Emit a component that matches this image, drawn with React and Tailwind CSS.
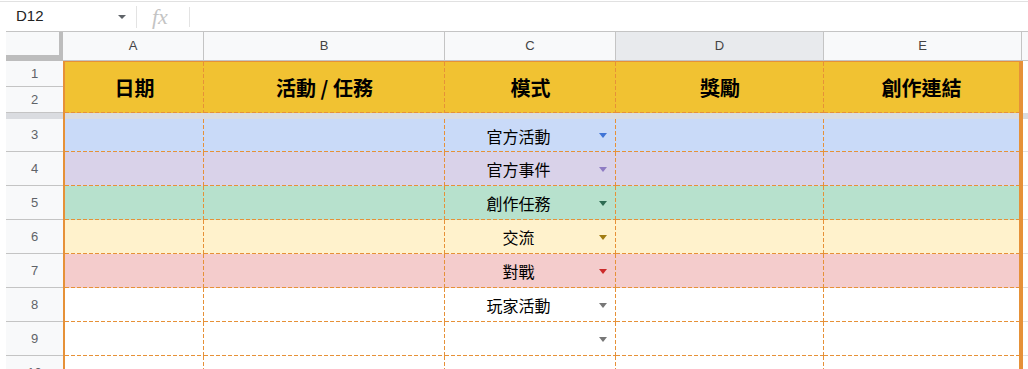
import React from "react"

const cols = ["A", "B", "C", "D", "E"]

const rows = [
  { n: 3, h: "h-[33px]", bg: "bg-[#c9daf8]", label: "官方活動", arrow: "#3f74d6" },
  { n: 4, h: "h-[34px]", bg: "bg-[#d9d2e9]", label: "官方事件", arrow: "#8e7cc3" },
  { n: 5, h: "h-[34px]", bg: "bg-[#b7e1cd]", label: "創作任務", arrow: "#2d6b52" },
  { n: 6, h: "h-[34px]", bg: "bg-[#fff2cc]", label: "交流", arrow: "#a07c12" },
  { n: 7, h: "h-[34px]", bg: "bg-[#f4cccc]", label: "對戰", arrow: "#cc2a2a" },
  { n: 8, h: "h-[34px]", bg: "bg-white", label: "玩家活動", arrow: "#777777" },
  { n: 9, h: "h-[34px]", bg: "bg-white", label: "", arrow: "#777777" },
  { n: 10, h: "h-[34px]", bg: "bg-white", label: "", arrow: null },
]

// dashed right + bottom cell lines, 4px on / 2px off like the sheet draws them
const dash =
  "bg-no-repeat [background-image:repeating-linear-gradient(to_bottom,#e69138_0_4px,transparent_4px_6px),repeating-linear-gradient(to_right,#e69138_0_4px,transparent_4px_6px)] [background-size:1px_100%,100%_1px] [background-position:right_top,left_bottom]"
const dashB =
  "bg-no-repeat [background-image:repeating-linear-gradient(to_right,#e69138_0_4px,transparent_4px_6px)] [background-size:100%_1px] [background-position:left_bottom]"

function Arrow({ color }) {
  return (
    <svg width="8" height="5" viewBox="0 0 8 5">
      <path d="M0 0h8L4 5z" fill={color} />
    </svg>
  )
}

function RowHead({ children, h }) {
  return (
    <div className={`w-[57px] ${h} shrink-0 bg-[#f8f9fa] border-b border-[#c4c4c4] flex items-center justify-center text-[13px] text-[#5f6368]`}>
      {children}
    </div>
  )
}

export default function App() {
  return (
    <div className="w-[1028px] h-[369px] overflow-hidden bg-white font-['Liberation_Sans',Arial,sans-serif]">
      {/* formula bar */}
      <div className="h-[31px] pt-px">
        <div className="h-full border-t border-[#e1e1e1] flex items-center">
          <span className="ml-[16px] w-[90px] text-[15px] text-[#222]">D12</span>
          <span className="ml-[12px] flex"><svg width="8" height="4" viewBox="0 0 8 4"><path d="M0 0h8L4 4z" fill="#5f6368" /></svg></span>
          <span className="ml-[10px] w-px h-[22px] bg-[#e3e3e3]" />
          <span className="ml-[15px] font-['Liberation_Serif',serif] italic text-[22px] text-[#c4c4c4] leading-none">fx</span>
          <span className="ml-[21px] w-px h-[20px] bg-[#e3e3e3]" />
        </div>
      </div>

      <div className="ml-[6px]">
        {/* column letters */}
        <div className="flex h-[30px] border-t border-[#c4c4c4] bg-[#f8f9fa]">
          <div className="w-[57px] flex flex-col">
            <div className="flex flex-1">
              <div className="flex-1" />
              <div className="w-[4px] bg-[#bdbdbd]" />
            </div>
            <div className="h-[6px] bg-[#bdbdbd]" />
          </div>
          {cols.map((c, i) => (
            <div
              key={c}
              className={`${["w-[141px]", "w-[241px]", "w-[171px]", "w-[208px]", "w-[198px]"][i]} ${c === "D" ? "bg-[#e8eaed]" : ""} border-r border-b border-[#c4c4c4] flex items-center justify-center text-[13px] text-[#444]`}
            >
              {c}
            </div>
          ))}
          <div className="flex-1 border-b border-[#c4c4c4]" />
        </div>

        {/* header rows 1-2 */}
        <div className="flex h-[52px]">
          <div className="flex flex-col">
            <RowHead h="h-[26px]">1</RowHead>
            <RowHead h="h-[26px]">2</RowHead>
          </div>
          <div className="w-[960px] flex border-t border-l-2 border-r-4 border-[#e69138] bg-[#f1c232] font-['Noto_Sans_CJK_TC',sans-serif] font-bold text-[20px] text-black">
            <div className={`w-[139px] ${dash} flex items-center justify-center`}>日期</div>
            <div className={`w-[241px] ${dash} flex items-center justify-center`}>活動 / 任務</div>
            <div className={`w-[171px] ${dash} flex items-center justify-center`}>模式</div>
            <div className={`w-[208px] ${dash} flex items-center justify-center`}>獎勵</div>
            <div className={`flex-1 ${dashB} flex items-center justify-center`}>創作連結</div>
          </div>
          <div className="flex-1" />
        </div>

        {/* frozen divider */}
        <div className="flex h-[6px] bg-[#dadce0]">
          <div className="w-[57px]" />
          <div className="w-[960px] border-l-2 border-r-4 border-[#e69138]" />
        </div>

        {/* data rows */}
        {rows.map((r) => (
          <div key={r.n} className="flex">
            <RowHead h={r.h}>{r.n}</RowHead>
            <div className={`w-[960px] ${r.h} flex border-l-2 border-r-4 border-[#e69138] ${r.bg} font-['Noto_Sans_CJK_TC',sans-serif] text-[16px] text-black`}>
              <div className={`w-[139px] ${dash}`} />
              <div className={`w-[241px] ${dash}`} />
              <div className={`w-[171px] ${dash} flex items-center`}>
                <span className="flex-1 text-center">{r.label}</span>
                <span className="w-[22px] mr-[2px] flex justify-center">{r.arrow && <Arrow color={r.arrow} />}</span>
              </div>
              <div className={`w-[208px] ${dash}`} />
              <div className={`flex-1 ${dashB}`} />
            </div>
            <div className={`flex-1 ${r.h} border-b border-[#e2e2e2]`} />
          </div>
        ))}
      </div>
    </div>
  )
}
